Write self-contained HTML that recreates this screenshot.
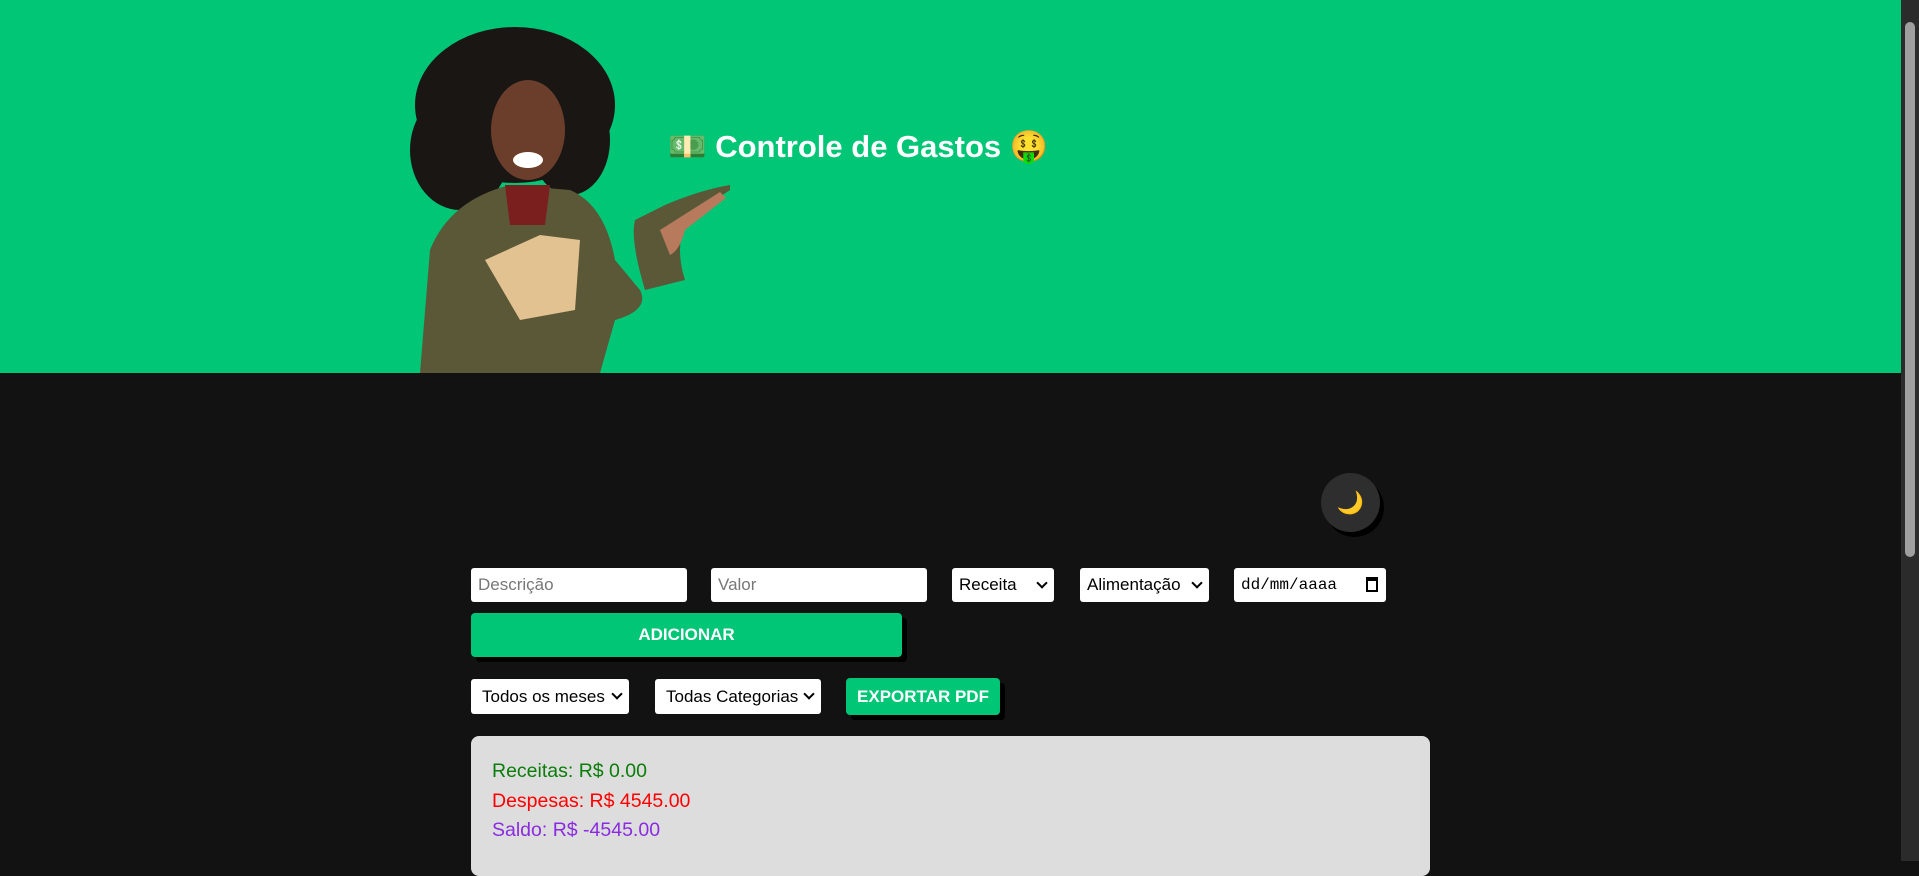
<!DOCTYPE html>
<html><head><meta charset="utf-8"><style>
*{box-sizing:border-box;margin:0;padding:0}
html,body{width:1919px;height:861px;overflow:hidden;background:#121212;font-family:"Liberation Sans",sans-serif}
.hdr{position:absolute;left:0;top:0;width:1901px;height:373px;background:#00c676}
.title{position:absolute;left:668px;top:128px;color:#fff;font-size:31px;font-weight:bold;white-space:nowrap}
.in{position:absolute;background:#fff;border-radius:3px;font-size:17px;color:#000;padding-left:7px;display:flex;align-items:center;height:34px;top:568px}
.ph{color:#777}
.sel::after{content:"";position:absolute;right:8px;top:11px;width:6px;height:6px;border-right:2px solid #000;border-bottom:2px solid #000;transform:rotate(45deg)}
.btn{position:absolute;background:#00c676;color:#fff;font-weight:bold;font-size:17px;border-radius:4px;display:flex;align-items:center;justify-content:center;box-shadow:5px 5px 0 #000}
.sum{position:absolute;left:471px;top:736px;width:959px;height:140px;background:#ddd;border-radius:8px;padding:21px 0 0 21px;font-size:19.5px;line-height:29.5px}
.sb{position:absolute;left:1901px;top:0;width:18px;height:861px;background:#2b2b2b}
.thumb{position:absolute;left:1905px;top:22px;width:10px;height:535px;background:#9f9f9f;border-radius:5px}
</style></head><body>
<div class="hdr">
<svg style="position:absolute;left:400px;top:20px" width="340" height="353" viewBox="0 0 340 353">
<ellipse cx="115" cy="85" rx="100" ry="78" fill="#1a1614"/>
<ellipse cx="60" cy="130" rx="50" ry="60" fill="#1a1614"/>
<ellipse cx="170" cy="120" rx="40" ry="55" fill="#1a1614"/>
<path d="M20 353 L30 230 Q50 180 110 165 L170 170 Q205 185 215 240 L240 270 Q250 290 215 300 L200 353 Z" fill="#5b5838"/>
<path d="M245 270 Q230 220 235 200 L265 185 Q300 170 330 165 L330 170 L285 200 Q275 230 285 260 Z" fill="#5b5838"/>
<ellipse cx="128" cy="110" rx="37" ry="50" fill="#6b3e2c"/>
<path d="M105 165 L150 165 L145 205 L110 205 Z" fill="#7a1e1e"/>
<path d="M260 210 L320 172 L326 178 L285 210 Q280 230 270 235 Z" fill="#b77a5c"/>
<path d="M85 240 L140 215 L180 220 L175 290 L120 300 Z" fill="#e3c291"/>
<ellipse cx="128" cy="140" rx="15" ry="8" fill="#fff"/>
</svg>
<div class="title">💵&nbsp;Controle de Gastos&nbsp;🤑</div>
</div>
<div style="position:absolute;left:1321px;top:473px;width:59px;height:59px;border-radius:50%;background:#2e2e2e;box-shadow:4px 5px 0 #000;display:flex;align-items:center;justify-content:center;font-size:22px">🌙</div>
<div class="in ph" style="left:471px;width:216px">Descrição</div>
<div class="in ph" style="left:711px;width:216px">Valor</div>
<div class="in sel" style="left:952px;width:102px">Receita</div>
<div class="in sel" style="left:1080px;width:129px">Alimentação</div>
<div class="in" style="left:1234px;width:152px;font-family:'Liberation Mono',monospace;font-size:16px">dd/mm/aaaa<span style="position:absolute;right:8px;top:9px;width:12px;height:15px;border:2px solid #000;border-top-width:4px"></span></div>
<div class="btn" style="left:471px;top:613px;width:431px;height:44px">ADICIONAR</div>
<div class="in sel" style="left:471px;top:679px;width:158px;height:35px;padding-left:11px">Todos os meses</div>
<div class="in sel" style="left:655px;top:679px;width:166px;height:35px;padding-left:11px">Todas Categorias</div>
<div class="btn" style="left:846px;top:678px;width:154px;height:37px">EXPORTAR PDF</div>
<div class="sum"><div style="color:#0a7d0a">Receitas: R$ 0.00</div><div style="color:#f00">Despesas: R$ 4545.00</div><div style="color:#8a2be2">Saldo: R$ -4545.00</div></div>
<div class="sb"></div><div class="thumb"></div>
</body></html>
